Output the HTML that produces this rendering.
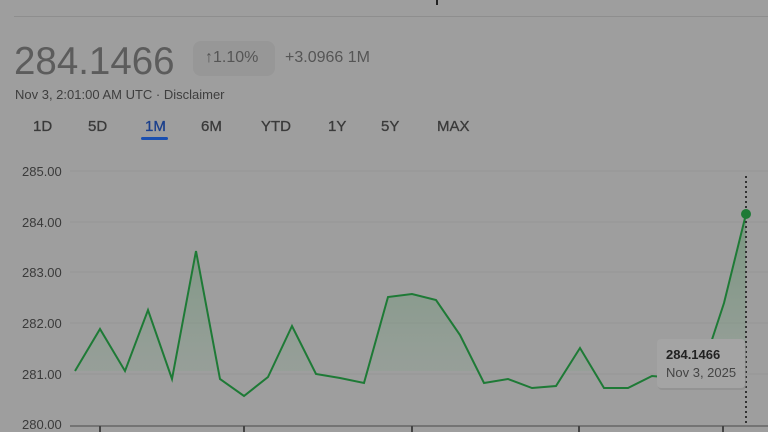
<!DOCTYPE html>
<html><head><style>
body{margin:0;width:768px;height:432px;overflow:hidden;background:#9e9e9e;font-family:"Liberation Sans",Arial,sans-serif;position:relative}
.a{position:absolute;white-space:nowrap}
</style></head><body>
<div class="a" style="left:14px;top:16px;width:754px;height:1px;background:#8e8e8e"></div>
<div class="a" style="left:436px;top:0;width:2px;height:5px;background:#222"></div>
<div class="a" style="left:14px;top:40px;font-size:38.5px;color:#5c5c5c">284.1466</div>
<div class="a" style="left:193px;top:41px;width:82px;height:35px;border-radius:8px;background:#979797"></div>
<div class="a" style="left:205px;top:49px;font-size:16px;color:#555">↑1.10%</div>
<div class="a" style="left:285px;top:49px;font-size:16px;color:#555">+3.0966 1M</div>
<div class="a" style="left:15px;top:87px;font-size:13px;color:#3e3e3e">Nov 3, 2:01:00 AM UTC · Disclaimer</div>
<div class="a" style="top:118px;font-size:15px;color:#3a3a3a;left:0;width:768px;-webkit-text-stroke:0.3px #3a3a3a">
<span class="a" style="left:33px">1D</span><span class="a" style="left:88px">5D</span><span class="a" style="left:145px;color:#1a3f8c;-webkit-text-stroke:0.3px #1a3f8c">1M</span><span class="a" style="left:201px">6M</span><span class="a" style="left:261px">YTD</span><span class="a" style="left:328px">1Y</span><span class="a" style="left:381px">5Y</span><span class="a" style="left:437px">MAX</span></div>
<div class="a" style="left:141px;top:137px;width:27px;height:3px;border-radius:2px;background:#1a4fb0"></div>
<svg class="a" style="left:0;top:0" width="768" height="432">
<g stroke="#959595" stroke-width="1">
<line x1="70" y1="171" x2="768" y2="171"/><line x1="70" y1="222" x2="768" y2="222"/><line x1="70" y1="272" x2="768" y2="272"/><line x1="70" y1="323" x2="768" y2="323"/><line x1="70" y1="374" x2="768" y2="374"/></g>
<line x1="70" y1="426" x2="768" y2="426" stroke="#666" stroke-width="1.5"/>
<g stroke="#444" stroke-width="2"><line x1="100" y1="426" x2="100" y2="432"/><line x1="244" y1="426" x2="244" y2="432"/><line x1="412" y1="426" x2="412" y2="432"/><line x1="579" y1="426" x2="579" y2="432"/><line x1="723" y1="426" x2="723" y2="432"/></g>
<g font-size="13" fill="#3a3a3a"><text x="22" y="176">285.00</text><text x="22" y="227">284.00</text><text x="22" y="277">283.00</text><text x="22" y="328">282.00</text><text x="22" y="379">281.00</text><text x="22" y="429">280.00</text></g>
<defs><linearGradient id="g" x1="0" y1="0" x2="0" y2="1"><stop offset="0" stop-color="#5f8f6a" stop-opacity=".6"/><stop offset="1" stop-color="#8fa394" stop-opacity=".3"/></linearGradient>
<clipPath id="c"><rect x="0" y="0" width="768" height="371"/></clipPath></defs>
<polygon clip-path="url(#c)" fill="url(#g)" points="75,371 100,329 125,371 148,310 172,379 196,251 220,379 244,396 268,377 292,326 316,374 340,378 364,383 388,297 412,294 436,300 460,335 484,383 508,379 532,388 556,386 580,348 604,388 628,388 652,376 676,378 700,376 724,303 746,214 746,371"/>
<polyline fill="none" stroke="#1e7a36" stroke-width="2" points="75,371 100,329 125,371 148,310 172,379 196,251 220,379 244,396 268,377 292,326 316,374 340,378 364,383 388,297 412,294 436,300 460,335 484,383 508,379 532,388 556,386 580,348 604,388 628,388 652,376 676,378 700,376 724,303 746,214"/>
<line x1="746" y1="176" x2="746" y2="426" stroke="#333" stroke-width="2" stroke-dasharray="2,3"/>
<circle cx="746" cy="214" r="5" fill="#1e7a36"/>
<rect x="658" y="341" width="88" height="49" rx="4" fill="#8c8c8c" opacity=".6"/>
<rect x="657" y="339" width="88" height="49" rx="4" fill="#a4a4a4"/>
<text x="666" y="359" font-size="13" font-weight="bold" fill="#222">284.1466</text>
<text x="666" y="377" font-size="13" fill="#444">Nov 3, 2025</text>
</svg>
</body></html>
